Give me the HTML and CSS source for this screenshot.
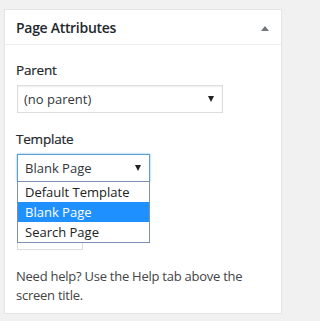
FILE: index.html
```html
<!DOCTYPE html>
<html>
<head>
<meta charset="utf-8">
<link rel="stylesheet" href="styles.css">
</head>
<body>
<div class="postbox">
  <div class="hndle">
    <h2 class="title">Page Attributes</h2>
    <span class="toggle"></span>
  </div>
  <div class="inside">
    <p class="label">Parent</p>
    <div class="select parent-select"><span>(no parent)</span><span class="caret"></span></div>
    <p class="label template-label">Template</p>
    <div class="template-wrap">
      <div class="select template-select"><span>Blank Page</span><span class="caret"></span></div>
      <ul class="dropdown">
        <li>Default Template</li>
        <li class="selected">Blank Page</li>
        <li>Search Page</li>
      </ul>
    </div>
    <div class="order-input"></div>
    <p class="help">Need help? Use the Help tab above the screen title.</p>
  </div>
</div>
</body>
</html>
```
FILE: styles.css
```css
html, body {
  margin: 0;
  padding: 0;
}
body {
  background: #f1f1f1;
  font-family: "Open Sans", "Noto Sans", sans-serif;
  color: #444;
  padding: 9px 8px 0 4px;
}
.postbox {
  box-sizing: border-box;
  width: 278px;
  background: #fff;
  border: 1px solid #e5e5e5;
  box-shadow: 0 1px 1px rgba(0,0,0,0.04);
}
.hndle {
  display: flex;
  align-items: center;
  justify-content: space-between;
  height: 34px;
  border-bottom: 1px solid #eee;
  padding: 0 12px 0 11px;
}
.title {
  margin: 0;
  font-size: 14px;
  font-weight: 600;
  color: #23282d;
  letter-spacing: -0.3px;
}
.toggle {
  width: 0;
  height: 0;
  border-left: 4px solid transparent;
  border-right: 4px solid transparent;
  border-bottom: 5px solid #72777c;
  margin-top: 2px;
}
.inside {
  padding: 16px 11px 8px 11px;
}
.label {
  margin: 0;
  font-size: 13.5px;
  font-weight: 400;
  color: #23282d;
  line-height: 18px;
  letter-spacing: -0.2px;
  -webkit-text-stroke: 0.2px #23282d;
}
.select {
  box-sizing: border-box;
  display: flex;
  align-items: center;
  justify-content: space-between;
  height: 28px;
  margin: 6px 0 0 1px;
  padding: 0 8px 0 6px;
  border: 1px solid #ddd;
  font-size: 13px;
  color: #32373c;
  box-shadow: inset 0 1px 2px rgba(0,0,0,0.07);
}
.parent-select {
  width: 206px;
}
.caret {
  width: 0;
  height: 0;
  border-left: 3px solid transparent;
  border-right: 3px solid transparent;
  border-top: 6px solid #222;
}
.template-label {
  margin-top: 17px;
}
.template-wrap {
  position: relative;
}
.template-select {
  width: 133px;
  border-color: #5b9dd9;
  box-shadow: 0 0 2px rgba(30,140,190,0.6);
  padding-left: 7px;
}
.dropdown {
  position: absolute;
  left: 1px;
  top: 27px;
  box-sizing: border-box;
  width: 133px;
  margin: 0;
  padding: 0;
  list-style: none;
  background: #fff;
  border: 1px solid #7f8fb0;
  font-size: 13px;
  color: #222;
  z-index: 2;
}
.dropdown li {
  height: 20px;
  line-height: 20px;
  padding-left: 7px;
}
.dropdown li.selected {
  background: #1e90ff;
  color: #fff;
}
.order-input {
  box-sizing: border-box;
  width: 66px;
  height: 28px;
  margin: 40px 0 0 1px;
  border: 1px solid #ddd;
}
.help {
  margin: 17px 0 0 0;
  font-size: 13px;
  line-height: 19px;
  color: #444;
  letter-spacing: -0.25px;
}
```
